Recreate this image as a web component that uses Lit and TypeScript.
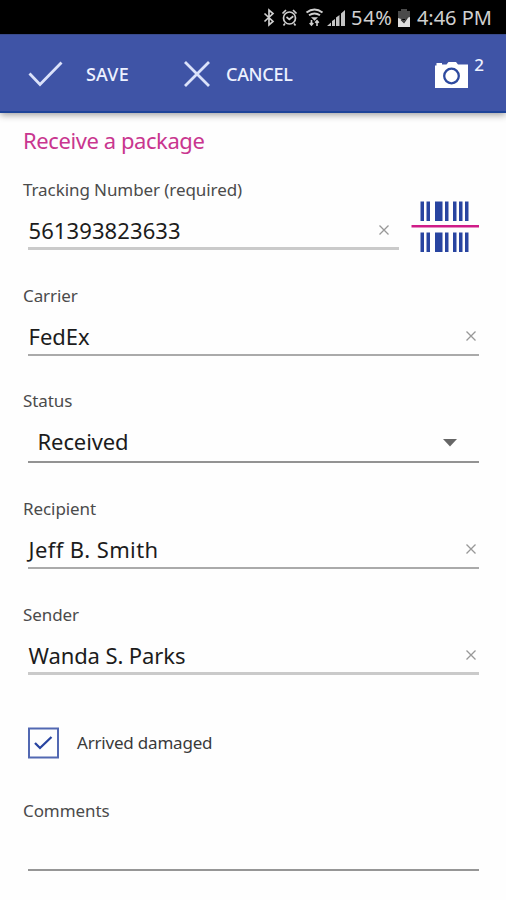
import { LitElement, html, css, svg, nothing } from "lit";
import { customElement, property } from "lit/decorators.js";

@customElement("status-bar")
class StatusBar extends LitElement {
  static styles = css`
    :host { display: flex; height: 34px; background: #000; color: #d0d0d0; align-items: center; padding: 2px 14px 0 262px; box-sizing: border-box; font-size: 20px; line-height: 32px; }
    svg { display: block; flex: none; }
    .pct { width: 46px; margin-left: 5px; letter-spacing: 0.7px; white-space: nowrap; }
    .time { margin-left: auto; white-space: nowrap; letter-spacing: 0; }
  `;
  render() {
    return html`
      <svg width="84" height="24" viewBox="262 6 84 24" fill="none" stroke="#cfcfcf" stroke-width="1.7">
        <path d="M264.500 13.500l8.500 8-4 3.500V10l4 3.500-8.500 8" />
        <circle cx="289.500" cy="18" r="6" />
        <path d="M286.500 17l2.800 2.300 4-3M282.500 13.500l3.500-3.500M293 10l3.500 3.500M285 23.500l-1.500 2M294 23.500l1.500 2" />
        <path d="M306.500 12.500q8-6 16 0M309 15.300q5.500-3.800 11 0" stroke-width="2" />
        <path d="M311 17.300h7l-3.500 3.500z" fill="#cfcfcf" stroke="none" />
        <path d="M311.500 20v5M309.700 23l1.800 2 1.800-2M317 26v-5M315.200 22.800l1.800-2 1.800 2" stroke-width="1.600" />
        <path d="M327 26l4-3.500V26zM332 26v-5l3-2v7zM336 26v-8.500l3.500-2.500v11zM341 26V13.500l4-3.500v16z" fill="#c4c4c4" stroke="none" />
      </svg>
      <span class="pct">54%</span>
      <svg width="14" height="20" viewBox="0 0 14 20">
        <path d="M4 1h6v2h3v8H1V3h3z" fill="#4b4b4b" />
        <path d="M1 10l3 1 3 2 3-3 3-1v10H1z" fill="#dedede" />
        <path d="M4 11.500l3 3 3.500-5" stroke="#333" stroke-width="1.300" fill="none" />
      </svg>
      <span class="time">4:46 PM</span>
    `;
  }
}

@customElement("action-bar")
class ActionBar extends LitElement {
  static styles = css`
    :host { display: flex; height: 79px; background: #3f54a6; border-bottom: 2px solid #1d4398; border-top: 1px solid #394a8b; box-sizing: border-box; align-items: center; padding: 2px 22px 0 28px; color: #edf1ff; box-shadow: 0 2px 7px rgba(0, 0, 0, 0.38); position: relative; font-size: 18px; font-weight: 500; }
    svg { display: block; flex: none; }
    .save { margin-left: 23px; width: 98px; letter-spacing: 0.2px; }
    .cancel { margin-left: 16px; letter-spacing: -0.3px; }
    .photos { display: flex; margin-left: auto; align-items: flex-start; }
    .count { font-size: 17px; line-height: 16px; margin: -4px 0 0 6px; }
  `;
  render() {
    return html`
      <svg width="35" height="28" viewBox="0 0 35 28" fill="none" stroke="#dbe2fa" stroke-width="2.800"><path d="M1.500 13.500L12 24.500 33.500 2.500" /></svg>
      <span class="save">SAVE</span>
      <svg width="26" height="28" viewBox="0 0 26 28" fill="none" stroke="#dbe2fa" stroke-width="2.800"><path d="M1 2l24 24M25 2L1 26" /></svg>
      <span class="cancel">CANCEL</span>
      <span class="photos">
        <svg width="33" height="27" viewBox="0 0 33 27">
          <path d="M1.500 4.500V2H7v1.500h4.500L13.500 1h7.500l2 2.500h10V27H0V4.500z" fill="#fff" />
          <circle cx="16.500" cy="15" r="7.300" fill="#fff" stroke="#2d4a9f" stroke-width="2.300" />
        </svg>
        <span class="count">2</span>
      </span>
    `;
  }
}

@customElement("form-field")
class FormField extends LitElement {
  @property() label = "";
  @property() value = "";
  @property() kind = "text";
  @property() line = "mid";
  static styles = css`
    :host { display: block; flex: 1; }
    .label { font-size: 17px; line-height: 24px; height: 24px; color: #4b4b4b; letter-spacing: -0.08px; white-space: nowrap; }
    .row { display: flex; align-items: center; height: 48px; padding: 10px 2px 0 0; margin-left: 5px; box-sizing: border-box; border-bottom: 2px solid #aaa; font-size: 22px; line-height: 32px; color: #1c1c1c; }
    .row.light { border-bottom: 3px solid #cacaca; padding-top: 11px; }
    .row.dark { border-bottom-color: #939393; height: 50px; padding: 7px 22px 0 9px; }
    .row.thin { border-bottom-color: #969696; }
    .value { flex: 1; letter-spacing: var(--value-track, 0px); padding-left: 0.5px; white-space: nowrap; }
    svg { display: block; flex: none; margin-right: var(--clear-inset, 0px); }
    .row.dark svg { margin-top: 4px; }
  `;
  render() {
    const cross = svg`<path d="M1.500 1.500l9 9M10.500 1.500l-9 9" stroke="#989898" stroke-width="1.300" fill="none" />`;
    const arrow = svg`<path d="M0 0h14L7 7.500z" fill="#666" />`;
    return html`
      <div class="label">${this.label}</div>
      <div class="row ${this.line}">
        <span class="value">${this.value}</span>
        ${this.kind === "text" ? html`<svg width="12" height="12" viewBox="0 0 12 12">${cross}</svg>` : nothing}
        ${this.kind === "select" ? html`<svg width="14" height="8" viewBox="0 0 14 8">${arrow}</svg>` : nothing}
      </div>
    `;
  }
}

@customElement("app-root")
class AppRoot extends LitElement {
  static styles = css`
    :host { display: block; width: 506px; height: 900px; background: #fefefe; overflow: hidden; font-family: "Noto Sans", "Open Sans", sans-serif; }
    .form { padding: 12px 27px 0 23px; }
    h1 { margin: 0; font-size: 22px; line-height: 30px; font-weight: 400; color: #c9368f; white-space: nowrap; letter-spacing: -0.42px; }
    .tracking { display: flex; margin-top: 23px; height: 72px; }
    .tracking form-field { flex: none; width: 376px; --clear-inset: 7px; --value-track: 0.1px; }
    .scan { display: block; margin: 23px 0 0 12px; flex: none; }
    .gap { margin-top: 34px; }
    .status { margin-top: 33px; --value-track: -0.1px; }
    .recipient { --value-track: 0.4px; }
    .sender { --value-track: -0.1px; }
    .check { display: flex; align-items: center; gap: 18px; margin: 52px 0 0 4px; height: 32px; font-size: 17px; line-height: 24px; letter-spacing: -0.2px; color: #3a3a3a; }
    .check svg { display: block; }
    .comments { margin-top: 40px; }
  `;
  render() {
    const bars = [[9.5, 3.5], [15.5, 3.5], [24, 7.5], [34, 3.5], [42, 3.5], [48, 3.5], [54, 3.5]];
    return html`
      <status-bar></status-bar>
      <action-bar></action-bar>
      <main class="form">
        <h1>Receive a package</h1>
        <div class="tracking">
          <form-field label="Tracking Number (required)" value="561393823633" line="light"></form-field>
          <svg class="scan" width="68" height="52" viewBox="0 0 68 52" fill="#2844a0">
            ${bars.map(([x, w]) => svg`<rect x=${x} y="0.500" width=${w} height="19.500" /><rect x=${x} y="31.500" width=${w} height="19.500" />`)}
            <rect x="0.500" y="24" width="67.500" height="2.500" fill="#cf1c88" />
          </svg>
        </div>
        <form-field class="gap" label="Carrier" value="FedEx"></form-field>
        <form-field class="status" label="Status" value="Received" kind="select" line="dark"></form-field>
        <form-field class="gap recipient" label="Recipient" value="Jeff B. Smith"></form-field>
        <form-field class="gap sender" label="Sender" value="Wanda S. Parks" line="light"></form-field>
        <div class="check">
          <svg width="32" height="32" viewBox="0 0 32 32" fill="none">
            <rect x="2" y="1.500" width="29" height="29" stroke="#5268b2" stroke-width="2" />
            <path d="M8 16l5 5L24.500 10" stroke="#2844a0" stroke-width="2.300" />
          </svg>
          <span>Arrived damaged</span>
        </div>
        <form-field class="comments" label="Comments" kind="empty" line="thin"></form-field>
      </main>
    `;
  }
}
